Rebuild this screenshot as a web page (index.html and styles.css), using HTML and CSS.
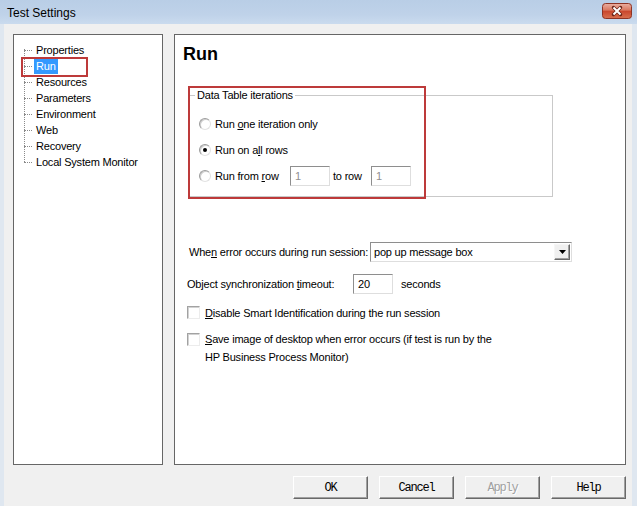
FILE: index.html
```html
<!DOCTYPE html>
<html>
<head>
<meta charset="utf-8">
<title>Test Settings</title>
<link rel="stylesheet" href="styles.css">
</head>
<body>
<div class="window">
  <div class="titlebar">
    <span class="title">Test Settings</span>
    <svg class="close" width="30" height="16" viewBox="0 0 30 16">
      <defs>
        <linearGradient id="cg" x1="0" y1="0" x2="0" y2="1">
          <stop offset="0" stop-color="#eab0a2"/>
          <stop offset="0.45" stop-color="#d9775f"/>
          <stop offset="0.5" stop-color="#c9452c"/>
          <stop offset="1" stop-color="#d8704f"/>
        </linearGradient>
      </defs>
      <rect x="0.5" y="0.5" width="29" height="15" rx="3" fill="url(#cg)" stroke="#8d3325"/>
      <path d="M11.5 4.5 L18.5 11.5 M18.5 4.5 L11.5 11.5" stroke="#6a2418" stroke-width="3.4" stroke-linecap="round"/>
      <path d="M11.5 4.5 L18.5 11.5 M18.5 4.5 L11.5 11.5" stroke="#ffffff" stroke-width="2"/>
    </svg>
  </div>
  <div class="client">
    <div class="panes">
      <div class="tree-pane">
        <ul class="tree">
          <li>Properties</li>
          <li><span class="sel">Run</span><span class="mark mark-run"></span></li>
          <li>Resources</li>
          <li>Parameters</li>
          <li>Environment</li>
          <li>Web</li>
          <li>Recovery</li>
          <li>Local System Monitor</li>
        </ul>
      </div>
      <div class="page">
        <h1 class="page-title">Run</h1>
        <div class="group-wrap">
          <fieldset class="group">
            <legend>Data Table iterations</legend>
            <div class="group-body">
              <div class="opt"><span class="radio"></span><span>Run <u>o</u>ne iteration only</span></div>
              <div class="opt"><span class="radio on"></span><span>Run on a<u>l</u>l rows</span></div>
              <div class="opt">
                <span class="radio"></span>
                <span class="from-label">Run from <u>r</u>ow</span>
                <input class="textbox disabled" type="text" value="1" disabled>
                <span class="to-label">to row</span>
                <input class="textbox disabled" type="text" value="1" disabled>
              </div>
            </div>
          </fieldset>
          <span class="mark mark-group"></span>
        </div>

        <div class="field-row row-error">
          <span class="error-label">Whe<u>n</u> error occurs during run session:</span>
          <div class="combo">
            <span class="combo-text">pop up message box</span>
            <span class="combo-btn">
              <svg width="7" height="4" viewBox="0 0 7 4"><path d="M0 0 H7 L3.5 4 Z" fill="#000"/></svg>
            </span>
          </div>
        </div>

        <div class="field-row row-sync">
          <span class="sync-label">Object synchronization <u>t</u>imeout:</span>
          <input class="textbox" type="text" value="20">
          <span class="unit">seconds</span>
        </div>

        <div class="check-row row-smart">
          <span class="check"></span>
          <span><u>D</u>isable Smart Identification during the run session</span>
        </div>

        <div class="check-row row-image">
          <span class="check"></span>
          <span><u>S</u>ave image of desktop when error occurs (if test is run by the<br>HP Business Process Monitor)</span>
        </div>
      </div>
    </div>
    <div class="buttons">
      <button class="btn">OK</button>
      <button class="btn">Cancel</button>
      <button class="btn disabled">Apply</button>
      <button class="btn">Help</button>
    </div>
  </div>
</div>
</body>
</html>
```
FILE: styles.css
```css
* { box-sizing: border-box; }

html, body {
  margin: 0;
  padding: 0;
}

body {
  width: 637px;
  height: 506px;
  overflow: hidden;
  background: #dfe7f0;
  font-family: "Liberation Sans", Arial, sans-serif;
  font-size: 11px;
  letter-spacing: -0.2px;
  color: #000;
}

.window {
  display: flex;
  flex-direction: column;
  height: 506px;
}

/* title bar */
.titlebar {
  flex: none;
  height: 24px;
  display: flex;
  align-items: center;
  justify-content: space-between;
  padding-left: 7px;
  background: linear-gradient(to bottom, #b9cee6 0%, #bfd2e9 60%, #cadbee 100%);
}

.title {
  font-size: 12px;
  letter-spacing: 0;
  padding-top: 2px;
}

.close {
  display: block;
  margin-right: 5px;
  margin-top: -2px;
}

/* client area */
.client {
  flex: 1;
  margin: 0 5px 0 4px;
  background: #f0f0f0;
  padding: 10px 6px 0 9px;
}

.panes {
  display: flex;
  gap: 11px;
  height: 431px;
}

.tree-pane {
  flex: none;
  width: 150px;
  background: #fff;
  border: 1px solid #666;
  padding: 7px 0 0 10px;
}

.tree {
  list-style: none;
  margin: 0;
  padding: 0;
  position: relative;
}

.tree::before {
  content: "";
  position: absolute;
  left: 0;
  top: 7px;
  bottom: 8px;
  border-left: 1px dotted #8a8a8a;
}

.tree li {
  position: relative;
  height: 16px;
  line-height: 16px;
  padding-left: 12px;
  white-space: nowrap;
}

.tree li::before {
  content: "";
  position: absolute;
  left: 0;
  top: 8px;
  width: 8px;
  border-top: 1px dotted #8a8a8a;
}

.sel {
  display: inline-block;
  vertical-align: top;
  margin-top: 1px;
  margin-left: -2px;
  padding: 0 2px;
  line-height: 15px;
  background: #3399ff;
  color: #fff;
}

.mark {
  position: absolute;
  border: 2px solid #bd3a3a;
  pointer-events: none;
}

.mark-run {
  left: -3px;
  top: -1px;
  width: 67px;
  height: 20px;
}

/* right page */
.page {
  flex: 1;
  background: #fff;
  border: 1px solid #666;
  padding: 0 0 0 12px;
  white-space: nowrap;
}

.page-title {
  margin: 9px 0 0 -4px;
  font-size: 18px;
  line-height: 20px;
  font-weight: bold;
  letter-spacing: 0;
}

.group-wrap {
  position: relative;
  width: 364px;
  margin: 25px 0 0 2px;
}

.group {
  margin: 0;
  padding: 0;
  min-width: 0;
  border: 1px solid #c9c9c9;
}

.group legend {
  margin-left: 5px;
  padding: 0 2px;
  font-size: 11px;
  line-height: 13px;
}

.mark-group {
  left: -1px;
  top: -3px;
  width: 238px;
  height: 113px;
}

.group-body {
  display: flex;
  flex-direction: column;
  gap: 6px;
  padding: 12px 0 10px 9px;
}

.opt {
  display: flex;
  align-items: center;
  height: 20px;
}

.radio {
  flex: none;
  position: relative;
  width: 12px;
  height: 12px;
  margin-right: 4px;
  border-radius: 50%;
  background: #fff;
  border: 1px solid;
  border-color: #9c9c9c #e2e2e2 #e2e2e2 #9c9c9c;
  box-shadow: inset 1px 1px 0 #cfcfcf;
}

.radio.on::after {
  content: "";
  position: absolute;
  left: 3px;
  top: 3px;
  width: 4px;
  height: 4px;
  border-radius: 50%;
  background: #000;
}

.from-label {
  width: 75px;
}

.to-label {
  width: 38px;
  margin-left: 3px;
}

.textbox {
  flex: none;
  width: 40px;
  height: 20px;
  margin: 0;
  padding: 0 0 0 4px;
  border: 1px solid;
  border-color: #8e8e8e #dedede #dedede #8e8e8e;
  background: #fff;
  font-family: "Liberation Sans", Arial, sans-serif;
  font-size: 11px;
  color: #000;
  outline: none;
}

.textbox.disabled {
  color: #8f8f8f;
  -webkit-text-fill-color: #8f8f8f;
  background: #fff;
}

.field-row {
  display: flex;
  align-items: center;
  height: 20px;
}

.row-error {
  margin: 45px 0 0 2px;
}

.error-label {
  flex: none;
  width: 181px;
}

.combo {
  display: flex;
  align-items: center;
  justify-content: space-between;
  width: 202px;
  height: 20px;
  padding: 0 1px 0 3px;
  border: 1px solid;
  border-color: #8e8e8e #dedede #dedede #8e8e8e;
  background: #fff;
}

.combo-btn {
  display: flex;
  align-items: center;
  justify-content: center;
  width: 16px;
  height: 16px;
  background: #f0f0f0;
  border: 1px solid;
  border-color: #f6f6f6 #696969 #696969 #f6f6f6;
  box-shadow: inset -1px -1px 0 #a0a0a0;
}

.row-sync {
  margin-top: 12px;
}

.sync-label {
  flex: none;
  width: 166px;
}

.unit {
  margin-left: 8px;
}

.check-row {
  display: flex;
  align-items: flex-start;
}

.check {
  flex: none;
  width: 13px;
  height: 13px;
  margin-right: 5px;
  background: #fff;
  border: 1px solid;
  border-color: #a2a2a2 #ececec #ececec #a2a2a2;
  box-shadow: inset 1px 1px 0 #d2d2d2;
}

.row-smart {
  margin-top: 12px;
  line-height: 14px;
}

.row-image {
  margin-top: 10px;
  line-height: 18px;
}

.row-image .check {
  margin-top: 3px;
}

/* buttons */
.buttons {
  display: flex;
  justify-content: flex-end;
  gap: 11px;
  margin-top: 11px;
}

.btn {
  width: 75px;
  height: 23px;
  margin: 0;
  padding: 0;
  background: #f0f0f0;
  border: 1px solid;
  border-color: #ffffff #696969 #696969 #ffffff;
  box-shadow: inset -1px -1px 0 #a0a0a0;
  font-family: "Liberation Mono", "Courier New", monospace;
  font-size: 12px;
  letter-spacing: -1.2px;
  color: #000;
}

.btn.disabled {
  color: #a0a0a0;
  text-shadow: 1px 1px 0 #fff;
}
```
